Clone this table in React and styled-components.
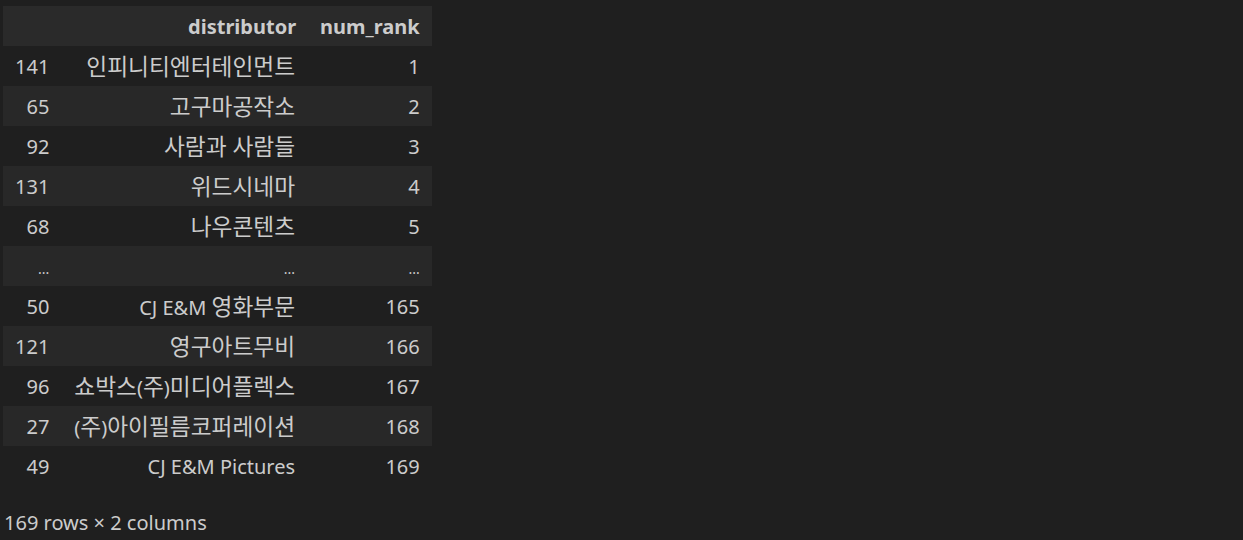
import styled, { createGlobalStyle } from "styled-components";

const GlobalStyle = createGlobalStyle`
  html, body {
    margin: 0;
    background: #1f1f1f;
  }
  body {
    font-family: "Noto Sans", "Noto Sans CJK KR", sans-serif;
    color: #cccccc;
  }
`;

const rows = [
  { idx: "141", name: "인피니티엔터테인먼트", rank: "1" },
  { idx: "65", name: "고구마공작소", rank: "2" },
  { idx: "92", name: "사람과 사람들", rank: "3" },
  { idx: "131", name: "위드시네마", rank: "4" },
  { idx: "68", name: "나우콘텐츠", rank: "5" },
  { idx: "...", name: "...", rank: "..." },
  { idx: "50", name: "CJ E&M 영화부문", rank: "165" },
  { idx: "121", name: "영구아트무비", rank: "166" },
  { idx: "96", name: "쇼박스(주)미디어플렉스", rank: "167" },
  { idx: "27", name: "(주)아이필름코퍼레이션", rank: "168" },
  { idx: "49", name: "CJ E&M Pictures", rank: "169" },
];

const Output = styled.div`
  padding: 6px 0 0 3px;
`;

const Table = styled.table`
  border-collapse: collapse;
  border-spacing: 0;
  font-size: 20px;
  line-height: 1;
`;

const HeadRow = styled.tr`
  background: #2a2a2a;
  height: 40px;
`;

const Row = styled.tr`
  height: 40px;
  background: ${({ $striped }) => ($striped ? "#282828" : "transparent")};
`;

const Th = styled.th`
  font-weight: 700;
  text-align: right;
  padding: 2px 12px 0;
  white-space: nowrap;
`;

const Td = styled.td`
  text-align: right;
  padding: 2px ${({ $wide }) => ($wide ? "13px" : "12px")} 0;
  white-space: nowrap;
  font-size: ${({ $dots }) => ($dots ? "14px" : "inherit")};
  vertical-align: ${({ $dots }) => ($dots ? "bottom" : "middle")};
  padding-bottom: ${({ $dots }) => ($dots ? "10px" : "0")};
`;

const Hangul = styled.span`
  font-size: 22.7px;
`;

const Footer = styled.div`
  font-size: 20px;
  padding: 23px 0 0 1px;
`;

// Korean runs are set a little larger so they take the width of the original font
const Text = ({ children }) =>
  children
    .split(/([가-힣]+(?:\s[가-힣]+)*)/)
    .filter(Boolean)
    .map((part, i) =>
      /[가-힣]/.test(part) ? <Hangul key={i}>{part}</Hangul> : <span key={i}>{part}</span>
    );

export default function App() {
  return (
    <Output>
      <GlobalStyle />
      <Table>
        <thead>
          <HeadRow>
            <Th />
            <Th>distributor</Th>
            <Th>num_rank</Th>
          </HeadRow>
        </thead>
        <tbody>
          {rows.map((r, i) => {
            const dots = r.idx === "...";
            return (
              <Row key={i} $striped={i % 2 === 1}>
                <Td $dots={dots}>{r.idx}</Td>
                <Td $dots={dots} $wide>
                  <Text>{r.name}</Text>
                </Td>
                <Td $dots={dots}>{r.rank}</Td>
              </Row>
            );
          })}
        </tbody>
      </Table>
      <Footer>169 rows × 2 columns</Footer>
    </Output>
  );
}
